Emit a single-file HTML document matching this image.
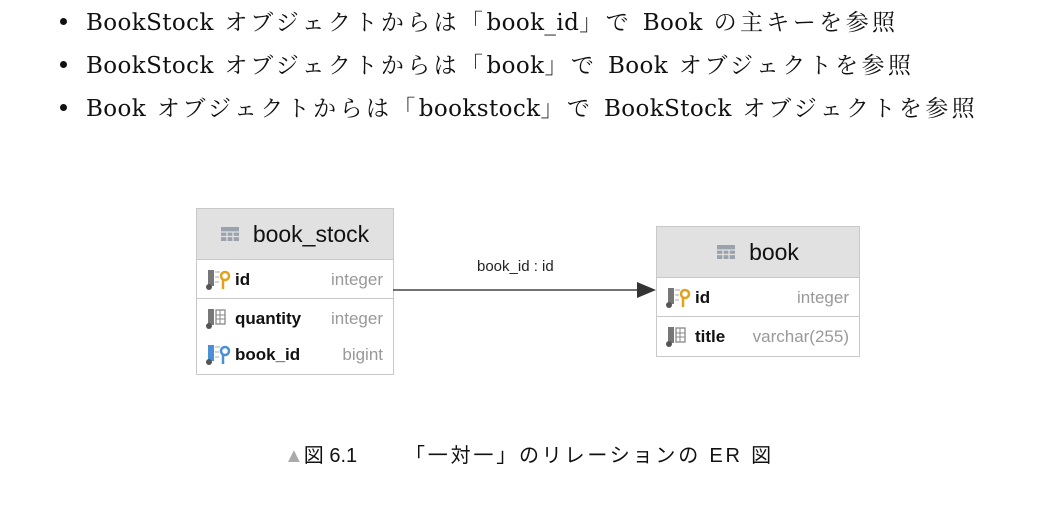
<!DOCTYPE html>
<html><head><meta charset="utf-8"><style>
body{margin:0;width:1050px;height:518px;background:#fff;position:relative;overflow:hidden;font-family:"Liberation Sans","Noto Sans CJK JP",sans-serif}
.b{position:absolute;left:86px;font-family:"DejaVu Serif","Noto Serif CJK SC",serif;font-size:23px;color:#111;white-space:nowrap;letter-spacing:3.4px}
.b i{font-style:normal;letter-spacing:0.4px}
.dot{position:absolute;left:60px;width:7px;height:7px;border-radius:50%;background:#111}
.t{position:absolute;border:1px solid #c8c8c8;background:#fff}
.h{background:#e1e1e1;border-bottom:1px solid #c8c8c8;font-size:23px;color:#111;display:flex;align-items:center;justify-content:center}
.r{position:absolute;left:0;right:0;height:36px;display:flex;align-items:center;font-size:17px}
.n{font-weight:bold;color:#111;margin-left:4px}
.ty{color:#999;margin-left:auto;margin-right:10px}
.ic{margin-left:8px;width:26px;height:24px}
.c{position:absolute;top:439px;font-size:20px;color:#111;white-space:nowrap}
</style></head><body>
<div class="dot" style="top:18px"></div><div class="b" style="top:4px"><i>BookStock</i> オブジェクトからは「<i>book_id</i>」で <i>Book</i> の主キーを参照</div>
<div class="dot" style="top:61px"></div><div class="b" style="top:47px"><i>BookStock</i> オブジェクトからは「<i>book</i>」で <i>Book</i> オブジェクトを参照</div>
<div class="dot" style="top:104px"></div><div class="b" style="top:90px"><i>Book</i> オブジェクトからは「<i>bookstock</i>」で <i>BookStock</i> オブジェクトを参照</div>

<svg width="0" height="0" style="position:absolute"><defs>
<g id="tb"><rect x="0" y="0" width="18" height="14" fill="#9aa3ad"/><g stroke="#e1e1e1" stroke-width="1.3"><line x1="0" y1="5" x2="18" y2="5"/><line x1="0" y1="9.5" x2="18" y2="9.5"/><line x1="6" y1="5" x2="6" y2="14"/><line x1="12" y1="5" x2="12" y2="14"/></g></g>
</defs></svg>

<div class="t" style="left:196px;top:208px;width:196px;height:165px">
 <div class="h" style="height:50px"><svg width="18" height="14" style="margin-right:14px"><use href="#tb"/></svg>book_stock</div>
 <div class="r" style="top:53px;border-bottom:1px solid #c8c8c8"><svg class="ic" viewBox="0 0 26 24"><rect x="3" y="2" width="6" height="16" fill="#777"/><circle cx="4" cy="19" r="3" fill="#555"/><g stroke="#aaa"><line x1="10" y1="4" x2="15" y2="4"/><line x1="10" y1="9" x2="14" y2="9"/><line x1="10" y1="14" x2="14" y2="14"/></g><circle cx="20" cy="8" r="4" fill="none" stroke="#e3a21a" stroke-width="2.5"/><line x1="18" y1="12" x2="18" y2="21" stroke="#e3a21a" stroke-width="2.5"/></svg><span class="n">id</span><span class="ty">integer</span></div>
 <div class="r" style="top:92px"><svg class="ic" viewBox="0 0 26 24"><rect x="3" y="2" width="6" height="16" fill="#777"/><circle cx="4" cy="19" r="3" fill="#555"/><rect x="11" y="3" width="9" height="14" fill="none" stroke="#888" stroke-width="1.3"/><line x1="11" y1="8" x2="20" y2="8" stroke="#888"/><line x1="11" y1="12" x2="20" y2="12" stroke="#888"/><line x1="15" y1="3" x2="15" y2="17" stroke="#888"/></svg><span class="n">quantity</span><span class="ty">integer</span></div>
 <div class="r" style="top:128px"><svg class="ic" viewBox="0 0 26 24"><rect x="3" y="2" width="6" height="16" fill="#4a90d9"/><circle cx="4" cy="19" r="3" fill="#555"/><g stroke="#aaa"><line x1="10" y1="4" x2="15" y2="4"/><line x1="10" y1="9" x2="14" y2="9"/><line x1="10" y1="14" x2="14" y2="14"/></g><circle cx="20" cy="8" r="4" fill="none" stroke="#4a90d9" stroke-width="2.5"/><line x1="18" y1="12" x2="18" y2="21" stroke="#4a90d9" stroke-width="2.5"/></svg><span class="n">book_id</span><span class="ty">bigint</span></div>
</div>

<div class="t" style="left:656px;top:226px;width:202px;height:129px">
 <div class="h" style="height:50px"><svg width="18" height="14" style="margin-right:14px"><use href="#tb"/></svg>book</div>
 <div class="r" style="top:53px;border-bottom:1px solid #c8c8c8"><svg class="ic" viewBox="0 0 26 24"><rect x="3" y="2" width="6" height="16" fill="#777"/><circle cx="4" cy="19" r="3" fill="#555"/><g stroke="#aaa"><line x1="10" y1="4" x2="15" y2="4"/><line x1="10" y1="9" x2="14" y2="9"/><line x1="10" y1="14" x2="14" y2="14"/></g><circle cx="20" cy="8" r="4" fill="none" stroke="#e3a21a" stroke-width="2.5"/><line x1="18" y1="12" x2="18" y2="21" stroke="#e3a21a" stroke-width="2.5"/></svg><span class="n">id</span><span class="ty">integer</span></div>
 <div class="r" style="top:92px"><svg class="ic" viewBox="0 0 26 24"><rect x="3" y="2" width="6" height="16" fill="#777"/><circle cx="4" cy="19" r="3" fill="#555"/><rect x="11" y="3" width="9" height="14" fill="none" stroke="#888" stroke-width="1.3"/><line x1="11" y1="8" x2="20" y2="8" stroke="#888"/><line x1="11" y1="12" x2="20" y2="12" stroke="#888"/><line x1="15" y1="3" x2="15" y2="17" stroke="#888"/></svg><span class="n">title</span><span class="ty">varchar(255)</span></div>
</div>

<svg style="position:absolute;left:393px;top:280px" width="265" height="20"><line x1="0" y1="10" x2="248" y2="10" stroke="#444" stroke-width="1.5"/><polygon points="244,2 263,10 244,18" fill="#333"/></svg>
<div style="position:absolute;left:477px;top:258px;font-size:15px;color:#222">book_id : id</div>

<div class="c" style="left:284px"><span style="color:#aaa">▲</span>図 6.1</div>
<div class="c" style="left:405px;letter-spacing:2.8px">「一対一」のリレーションの ER 図</div>
</body></html>
